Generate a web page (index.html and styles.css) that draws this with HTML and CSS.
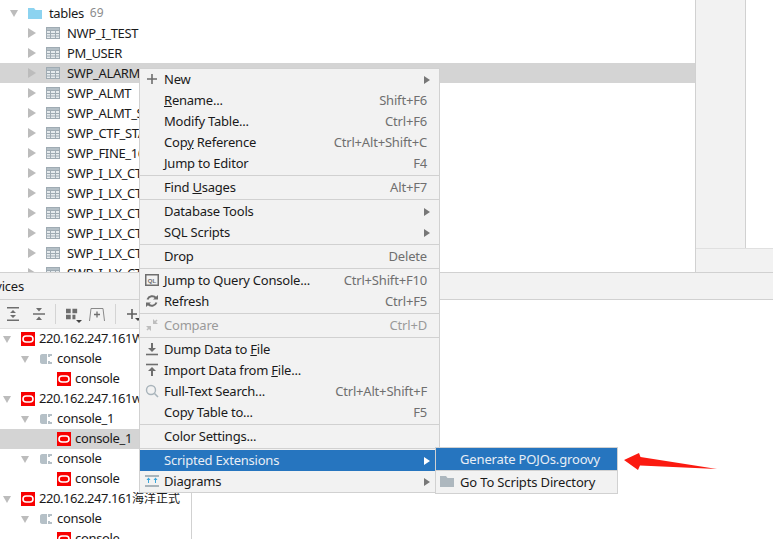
FILE: index.html
```html
<!DOCTYPE html>
<html lang="en">
<head>
<meta charset="utf-8">
<title>Database tree context menu</title>
<link rel="stylesheet" href="styles.css">
</head>
<body>
<svg class="defs" width="0" height="0" aria-hidden="true">
  <symbol id="i-table" viewBox="0 0 14 12">
    <rect x="0.5" y="0.5" width="13" height="11" fill="#e6ebee" stroke="#9fabb3"/>
    <rect x="1" y="1" width="12" height="2" fill="#b4bfc6"/>
    <path d="M0 3.5H14M0 6.5H14M0 9H14M4.5 3V12M9.5 3V12" stroke="#9fabb3" fill="none"/>
  </symbol>
  <symbol id="i-oracle" viewBox="0 0 14 14">
    <rect width="14" height="14" fill="#f80000"/>
    <rect x="2" y="4" width="10" height="6" rx="3" fill="none" stroke="#fff" stroke-width="1.6"/>
  </symbol>
  <symbol id="i-console" viewBox="0 0 14 12">
    <path d="M4 1H8V11H4C2.500 11 1 10.500 1 9V3C1 1.500 2.500 1 4 1Z" fill="#b5c0c7"/>
    <path d="M9 1H13V3H11V4H9ZM9 8H11V9H13V11H9Z" fill="#b5c0c7"/>
  </symbol>
</svg>
<div class="app">
  <div class="top">
    <div class="tree">
      <div class="row lv-tables"><span class="arrow-down"></span>
        <svg class="i-folder" viewBox="0 0 14 11"><path d="M0 0H6L7.500 2H14V11H0Z" fill="#8cd3f0"/></svg>
        <span class="label">tables</span><span class="count">69</span></div>
      <div class="row lv-table"><span class="arrow-right"></span><svg class="i-tbl"><use href="#i-table"/></svg><span class="label">NWP_I_TEST</span></div>
      <div class="row lv-table"><span class="arrow-right"></span><svg class="i-tbl"><use href="#i-table"/></svg><span class="label">PM_USER</span></div>
      <div class="row lv-table selected"><span class="arrow-right"></span><svg class="i-tbl"><use href="#i-table"/></svg><span class="label">SWP_ALARM</span></div>
      <div class="row lv-table"><span class="arrow-right"></span><svg class="i-tbl"><use href="#i-table"/></svg><span class="label">SWP_ALMT</span></div>
      <div class="row lv-table"><span class="arrow-right"></span><svg class="i-tbl"><use href="#i-table"/></svg><span class="label">SWP_ALMT_STAT</span></div>
      <div class="row lv-table"><span class="arrow-right"></span><svg class="i-tbl"><use href="#i-table"/></svg><span class="label">SWP_CTF_STAT</span></div>
      <div class="row lv-table"><span class="arrow-right"></span><svg class="i-tbl"><use href="#i-table"/></svg><span class="label">SWP_FINE_16</span></div>
      <div class="row lv-table"><span class="arrow-right"></span><svg class="i-tbl"><use href="#i-table"/></svg><span class="label">SWP_I_LX_CTF</span></div>
      <div class="row lv-table"><span class="arrow-right"></span><svg class="i-tbl"><use href="#i-table"/></svg><span class="label">SWP_I_LX_CTF</span></div>
      <div class="row lv-table"><span class="arrow-right"></span><svg class="i-tbl"><use href="#i-table"/></svg><span class="label">SWP_I_LX_CTF</span></div>
      <div class="row lv-table"><span class="arrow-right"></span><svg class="i-tbl"><use href="#i-table"/></svg><span class="label">SWP_I_LX_CTF</span></div>
      <div class="row lv-table"><span class="arrow-right"></span><svg class="i-tbl"><use href="#i-table"/></svg><span class="label">SWP_I_LX_CTF</span></div>
      <div class="row lv-table"><span class="arrow-right"></span><svg class="i-tbl"><use href="#i-table"/></svg><span class="label">SWP_I_LX_CTF</span></div>
    </div>
    <div class="side">
      <div class="side-upper"><div class="side-strip"></div></div>
      <div class="side-lower"></div>
    </div>
  </div>
  <div class="header"><div class="title"><span>Services</span></div></div>
  <div class="bottom">
    <div class="services">
      <div class="toolbar">
        <svg class="tb-icon" viewBox="0 0 12 14"><path d="M0 .75H12M0 13.250H12" stroke="#6e6e6e" stroke-width="1.500"/><path d="M6 3L9 6H3ZM6 11L3 8H9Z" fill="#6e6e6e"/></svg>
        <svg class="tb-icon" viewBox="0 0 12 14"><path d="M0 7H12" stroke="#6e6e6e" stroke-width="1.500"/><path d="M3 1H9L6 4.500ZM3 13H9L6 9.500Z" fill="#6e6e6e"/></svg>
        <span class="tb-sep"></span>
        <span class="tb-drop"><svg class="tb-icon" viewBox="0 0 14 14"><path d="M0 1H5.500V6H0ZM7.500 1H13V6H7.500ZM0 8H5.500V13H0ZM7.500 8H11V13H7.500Z" fill="#6e6e6e"/></svg><i class="mini"></i></span>
        <svg class="tb-pin" viewBox="0 0 16 14"><path d="M.5 14L2 1.500H14L15.500 14" fill="none" stroke="#8a8a8a"/><path d="M8 4.500V10.500M5 7.500H11" stroke="#6e6e6e" stroke-width="1.300"/></svg>
        <span class="tb-sep"></span>
        <span class="tb-drop tb-drop-plus"><svg class="tb-plus" viewBox="0 0 10 10"><path d="M5 0V10M0 5H10" stroke="#5f5f5f" stroke-width="1.600"/></svg><i class="mini"></i></span>
      </div>
      <div class="stree">
        <div class="srow l0"><span class="sarrow"></span><svg class="i-ora"><use href="#i-oracle"/></svg><span class="label ip">220.162.247.161WMS</span></div>
        <div class="srow l1"><span class="sarrow"></span><svg class="i-con"><use href="#i-console"/></svg><span class="label">console</span></div>
        <div class="srow l2"><svg class="i-ora"><use href="#i-oracle"/></svg><span class="label">console</span></div>
        <div class="srow l0"><span class="sarrow"></span><svg class="i-ora"><use href="#i-oracle"/></svg><span class="label ip">220.162.247.161wms</span></div>
        <div class="srow l1"><span class="sarrow"></span><svg class="i-con"><use href="#i-console"/></svg><span class="label">console_1</span></div>
        <div class="srow l2 selected"><svg class="i-ora"><use href="#i-oracle"/></svg><span class="label">console_1</span></div>
        <div class="srow l1"><span class="sarrow"></span><svg class="i-con"><use href="#i-console"/></svg><span class="label">console</span></div>
        <div class="srow l2"><svg class="i-ora"><use href="#i-oracle"/></svg><span class="label">console</span></div>
        <div class="srow l0"><span class="sarrow"></span><svg class="i-ora"><use href="#i-oracle"/></svg><span class="label ip">220.162.247.161<span class="cjk">海洋正式</span></span></div>
        <div class="srow l1"><span class="sarrow"></span><svg class="i-con"><use href="#i-console"/></svg><span class="label">console</span></div>
        <div class="srow l2"><svg class="i-ora"><use href="#i-oracle"/></svg><span class="label">console</span></div>
      </div>
    </div>
  </div>

  <div class="menu main-menu">
    <div class="mi"><svg class="mi-icon" viewBox="0 0 14 14"><path d="M7 2V12M2 7H12" stroke="#6e6e6e" stroke-width="1.600"/></svg><span class="mi-label">New</span><span class="sub"></span></div>
    <div class="mi"><span class="mi-label"><u>R</u>ename...</span><span class="key">Shift+F6</span></div>
    <div class="mi"><span class="mi-label">Modify Table...</span><span class="key">Ctrl+F6</span></div>
    <div class="mi"><span class="mi-label">Cop<u>y</u> Reference</span><span class="key">Ctrl+Alt+Shift+C</span></div>
    <div class="mi"><span class="mi-label">Jump to Editor</span><span class="key">F4</span></div>
    <div class="sep"></div>
    <div class="mi"><span class="mi-label">Find <u>U</u>sages</span><span class="key">Alt+F7</span></div>
    <div class="sep"></div>
    <div class="mi"><span class="mi-label">Database Tools</span><span class="sub"></span></div>
    <div class="mi"><span class="mi-label">SQL Scripts</span><span class="sub"></span></div>
    <div class="sep"></div>
    <div class="mi"><span class="mi-label">Drop</span><span class="key">Delete</span></div>
    <div class="sep"></div>
    <div class="mi"><svg class="mi-icon" viewBox="0 0 14 14"><rect x=".75" y="1.750" width="12.500" height="10.500" fill="#f2f2f2" stroke="#6e6e6e" stroke-width="1.500"/><text x="7" y="9.500" class="ql">QL</text></svg><span class="mi-label">Jump to Query Console...</span><span class="key">Ctrl+Shift+F10</span></div>
    <div class="mi"><svg class="mi-icon" viewBox="0 0 14 14"><path d="M2.500 5.500A5 5 0 0 1 11 4M11.500 8.500A5 5 0 0 1 3 10" fill="none" stroke="#6e6e6e" stroke-width="2"/><path d="M8 5.500H13V1ZM6 8.500H1V13Z" fill="#6e6e6e"/></svg><span class="mi-label">Refresh</span><span class="key">Ctrl+F5</span></div>
    <div class="sep"></div>
    <div class="mi disabled"><svg class="mi-icon" viewBox="0 0 14 14"><path d="M8 1V6H13ZM6 13V8H1Z" fill="#bdbdbd"/><path d="M9 5L12 2M5 9L2 12" stroke="#bdbdbd" stroke-width="1.500"/></svg><span class="mi-label">Compare</span><span class="key">Ctrl+D</span></div>
    <div class="sep"></div>
    <div class="mi"><svg class="mi-icon" viewBox="0 0 14 14"><path d="M1 12.500H13" stroke="#6e6e6e" stroke-width="1.600"/><path d="M7 1V6" stroke="#6e6e6e" stroke-width="2"/><path d="M3 6H11L7 10Z" fill="#6e6e6e"/></svg><span class="mi-label">Dump Data to <u>F</u>ile</span></div>
    <div class="mi"><svg class="mi-icon" viewBox="0 0 14 14"><path d="M1 1.500H13" stroke="#6e6e6e" stroke-width="1.600"/><path d="M7 8V13" stroke="#6e6e6e" stroke-width="2"/><path d="M3 8H11L7 4Z" fill="#6e6e6e"/></svg><span class="mi-label">Import Data from <u>F</u>ile...</span></div>
    <div class="mi"><svg class="mi-icon" viewBox="0 0 14 14"><circle cx="6" cy="6" r="4.500" fill="none" stroke="#a9b4bb" stroke-width="1.400"/><path d="M9.500 9.500L13 13" stroke="#a9b4bb" stroke-width="1.600"/></svg><span class="mi-label">Full-Text Search...</span><span class="key">Ctrl+Alt+Shift+F</span></div>
    <div class="mi"><span class="mi-label">Copy Table to...</span><span class="key">F5</span></div>
    <div class="sep"></div>
    <div class="mi"><span class="mi-label">Color Settings...</span></div>
    <div class="sep"></div>
    <div class="mi active"><span class="mi-label">Scripted Extensions</span><span class="sub"></span></div>
    <div class="mi"><svg class="mi-icon" viewBox="0 0 14 14"><path d="M0 1H14V3H0ZM0 11H14V13H0Z" fill="#a9b4bb"/><path d="M3.500 4V9M10.500 4V9" stroke="#3aa6dc"/><path d="M3.500 3.500L5.500 6H1.500ZM10.500 3.500L12.500 6H8.500Z" fill="#3aa6dc"/></svg><span class="mi-label">Diagrams</span><span class="sub"></span></div>
  </div>

  <div class="menu sub-menu">
    <div class="sub-item active">Generate POJOs.groovy</div>
    <div class="sub-line"></div>
    <div class="sub-item"><svg class="sub-folder" viewBox="0 0 14 11"><path d="M0 0H6L7.500 2H14V11H0Z" fill="#adb7be"/></svg>Go To Scripts Directory</div>
  </div>

  <svg class="red-arrow" viewBox="0 0 95 18"><path d="M1 8L16 1L17.500 5L94 17L17 13.500L15 18Z" fill="#fb1a10"/></svg>
</div>
</body>
</html>
```
FILE: styles.css
```css
html, body {
  margin: 0;
  padding: 0;
  background: #fff;
}
.defs { position: absolute; }
.app {
  position: relative;
  width: 773px;
  height: 539px;
  overflow: hidden;
  background: #fff;
  color: #1a1a1a;
  font: 13px/20px "Noto Sans", "Noto Sans CJK SC", sans-serif;
  display: flex;
  flex-direction: column;
}
.top {
  display: flex;
  height: 272px;
  flex: none;
  overflow: hidden;
  border-bottom: 1px solid #d1d1d1;
  box-sizing: content-box;
}
.tree {
  width: 695px;
  flex: none;
  padding-top: 3px;
}
.row {
  display: flex;
  align-items: center;
  height: 20px;
  white-space: nowrap;
}
.row .label { letter-spacing: -0.35px; }
.lv-tables { padding-left: 10px; }
.lv-table { padding-left: 28px; }
.row.selected, .srow.selected { background: #d4d4d4; }
.arrow-right {
  width: 0;
  height: 0;
  border-style: solid;
  border-width: 5px 0 5px 8px;
  border-color: transparent transparent transparent #bcbcbc;
  margin-right: 10px;
}
.arrow-down {
  width: 0;
  height: 0;
  border-style: solid;
  border-width: 7px 4px 0;
  border-color: #bcbcbc transparent transparent;
  margin-right: 10px;
}
.i-folder { width: 14px; height: 11px; margin-right: 7px; }
.i-tbl { width: 14px; height: 12px; margin-right: 7px; }
.count { color: #8c8c8c; margin-left: 6px; font-size: 12px; }
.side {
  flex: 1;
  display: flex;
  flex-direction: column;
  border-left: 1px solid #d1d1d1;
}
.side-upper { height: 248px; flex: none; }
.side-strip {
  width: 49px;
  height: 100%;
  background: #f2f2f2;
  border-right: 1px solid #d1d1d1;
}
.side-lower {
  flex: 1;
  background: #f2f2f2;
  border-top: 1px solid #e0e0e0;
}
.header {
  height: 26px;
  flex: none;
  background: #f2f2f2;
  border-bottom: 1px solid #d1d1d1;
  display: flex;
  align-items: center;
}
.title {
  width: 24px;
  display: flex;
  justify-content: flex-end;
  white-space: nowrap;
  letter-spacing: -0.2px;
}
.bottom { flex: 1; display: flex; min-height: 0; }
.services {
  width: 191px;
  flex: none;
  border-right: 1px solid #d1d1d1;
  overflow: hidden;
}
.toolbar {
  height: 28px;
  background: #f2f2f2;
  border-bottom: 1px solid #e0e0e0;
  display: flex;
  align-items: center;
  padding-left: 7px;
  gap: 14px;
}
.tb-icon { width: 12px; height: 14px; display: block; }
.tb-pin { width: 16px; height: 14px; margin-left: -3px; }
.tb-plus { width: 10px; height: 10px; display: block; }
.tb-drop-plus { margin-left: 1px; }
.tb-sep { width: 1px; height: 20px; background: #d4d4d4; margin: 0 -4px; }
.tb-drop { position: relative; display: block; }
.mini {
  position: absolute;
  right: -4px;
  bottom: -2px;
  border-style: solid;
  border-width: 3px 3px 0;
  border-color: #444 transparent transparent;
}
.srow {
  display: flex;
  align-items: center;
  height: 20px;
  white-space: nowrap;
}
.srow .label { letter-spacing: -0.33px; padding-bottom: 2px; }
.srow .ip { letter-spacing: -0.45px; }
.cjk { font-size: 12px; letter-spacing: 0; }
.l0 { padding-left: 3px; }
.l1 { padding-left: 21px; }
.l2 { padding-left: 57px; }
.sarrow {
  width: 0;
  height: 0;
  border-style: solid;
  border-width: 7px 4px 0;
  border-color: #bcbcbc transparent transparent;
  margin-right: 10px;
}
.i-ora { width: 14px; height: 14px; margin-right: 4px; }
.i-con { width: 14px; height: 12px; margin-right: 4px; }
.menu {
  position: absolute;
  background: #f2f2f2;
  border: 1px solid #d1d1d1;
  box-sizing: border-box;
}
.main-menu {
  left: 139px;
  top: 68px;
  width: 301px;
  height: 425px;
}
.mi {
  height: 21px;
  display: flex;
  align-items: center;
  padding-left: 24px;
  padding-right: 12px;
  position: relative;
  white-space: nowrap;
}
.mi-icon {
  position: absolute;
  left: 5px;
  top: 3px;
  width: 14px;
  height: 14px;
}
.ql {
  font: bold 6px "Liberation Sans", sans-serif;
  fill: #6e6e6e;
  text-anchor: middle;
}
.mi-label { flex: 1; letter-spacing: -0.22px; padding-bottom: 2px; }
.key { color: #6f6f6f; letter-spacing: -0.18px; padding-bottom: 2px; }
.sub {
  width: 0;
  height: 0;
  border-style: solid;
  border-width: 4px 0 4px 6px;
  border-color: transparent transparent transparent #777;
  margin-right: -3px;
}
.sep {
  height: 1px;
  margin-top: 1px;
  margin-bottom: 1px;
  background: #d1d1d1;
}
.disabled, .disabled .key { color: #9a9a9a; }
.active { background: #2675bf; color: #e8eef5; }
.active .sub { border-left-color: #fff; }
.sub-menu {
  left: 435px;
  top: 447px;
  width: 183px;
  height: 47px;
}
.sub-item {
  height: 22px;
  padding-left: 24px;
  display: flex;
  align-items: center;
  white-space: nowrap;
  position: relative;
  letter-spacing: -0.15px;
}
.sub-line { height: 1px; background: #d1d1d1; }
.sub-folder {
  position: absolute;
  left: 4px;
  top: 5px;
  width: 14px;
  height: 11px;
}
.red-arrow {
  position: absolute;
  left: 623px;
  top: 452px;
  width: 95px;
  height: 18px;
}
```
